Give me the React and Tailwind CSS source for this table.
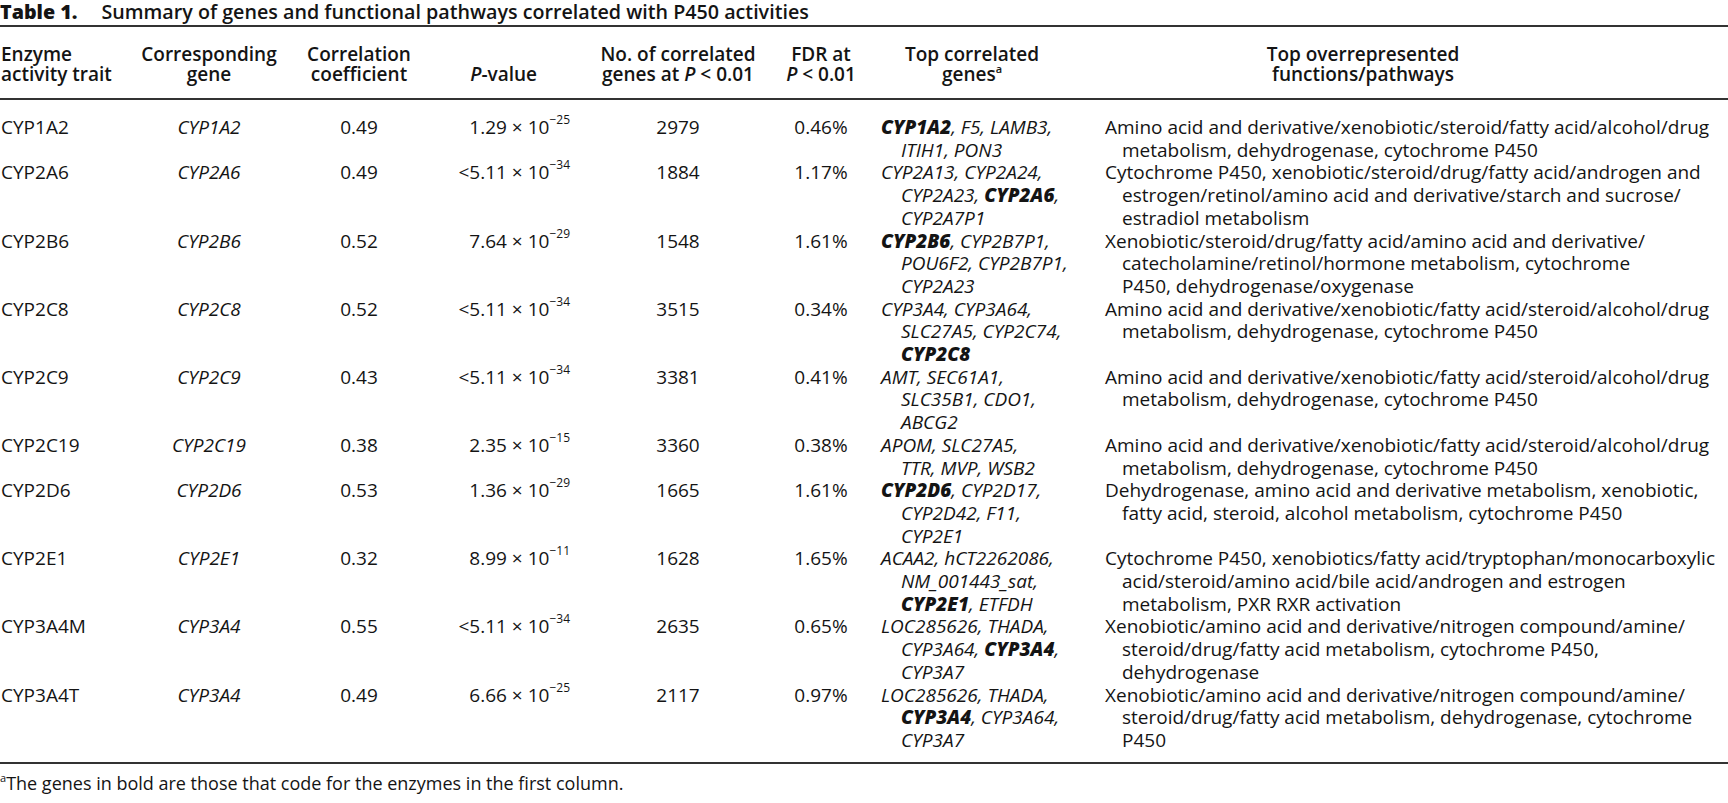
import React from "react";

const rows = [
  {
    trait: "CYP1A2", gene: "CYP1A2", r: "0.49", p: ["1.29", "25"], n: "2979", fdr: "0.46%",
    genes: ["**CYP1A2**, F5, LAMB3,", "ITIH1, PON3"],
    fn: ["Amino acid and derivative/xenobiotic/steroid/fatty acid/alcohol/drug", "metabolism, dehydrogenase, cytochrome P450"],
  },
  {
    trait: "CYP2A6", gene: "CYP2A6", r: "0.49", p: ["<5.11", "34"], n: "1884", fdr: "1.17%",
    genes: ["CYP2A13, CYP2A24,", "CYP2A23, **CYP2A6**,", "CYP2A7P1"],
    fn: ["Cytochrome P450, xenobiotic/steroid/drug/fatty acid/androgen and", "estrogen/retinol/amino acid and derivative/starch and sucrose/", "estradiol metabolism"],
  },
  {
    trait: "CYP2B6", gene: "CYP2B6", r: "0.52", p: ["7.64", "29"], n: "1548", fdr: "1.61%",
    genes: ["**CYP2B6**, CYP2B7P1,", "POU6F2, CYP2B7P1,", "CYP2A23"],
    fn: ["Xenobiotic/steroid/drug/fatty acid/amino acid and derivative/", "catecholamine/retinol/hormone metabolism, cytochrome", "P450, dehydrogenase/oxygenase"],
  },
  {
    trait: "CYP2C8", gene: "CYP2C8", r: "0.52", p: ["<5.11", "34"], n: "3515", fdr: "0.34%",
    genes: ["CYP3A4, CYP3A64,", "SLC27A5, CYP2C74,", "**CYP2C8**"],
    fn: ["Amino acid and derivative/xenobiotic/fatty acid/steroid/alcohol/drug", "metabolism, dehydrogenase, cytochrome P450"],
  },
  {
    trait: "CYP2C9", gene: "CYP2C9", r: "0.43", p: ["<5.11", "34"], n: "3381", fdr: "0.41%",
    genes: ["AMT, SEC61A1,", "SLC35B1, CDO1,", "ABCG2"],
    fn: ["Amino acid and derivative/xenobiotic/fatty acid/steroid/alcohol/drug", "metabolism, dehydrogenase, cytochrome P450"],
  },
  {
    trait: "CYP2C19", gene: "CYP2C19", r: "0.38", p: ["2.35", "15"], n: "3360", fdr: "0.38%",
    genes: ["APOM, SLC27A5,", "TTR, MVP, WSB2"],
    fn: ["Amino acid and derivative/xenobiotic/fatty acid/steroid/alcohol/drug", "metabolism, dehydrogenase, cytochrome P450"],
  },
  {
    trait: "CYP2D6", gene: "CYP2D6", r: "0.53", p: ["1.36", "29"], n: "1665", fdr: "1.61%",
    genes: ["**CYP2D6**, CYP2D17,", "CYP2D42, F11,", "CYP2E1"],
    fn: ["Dehydrogenase, amino acid and derivative metabolism, xenobiotic,", "fatty acid, steroid, alcohol metabolism, cytochrome P450"],
  },
  {
    trait: "CYP2E1", gene: "CYP2E1", r: "0.32", p: ["8.99", "11"], n: "1628", fdr: "1.65%",
    genes: ["ACAA2, hCT2262086,", "NM_001443_sat,", "**CYP2E1**, ETFDH"],
    fn: ["Cytochrome P450, xenobiotics/fatty acid/tryptophan/monocarboxylic", "acid/steroid/amino acid/bile acid/androgen and estrogen", "metabolism, PXR RXR activation"],
  },
  {
    trait: "CYP3A4M", gene: "CYP3A4", r: "0.55", p: ["<5.11", "34"], n: "2635", fdr: "0.65%",
    genes: ["LOC285626, THADA,", "CYP3A64, **CYP3A4**,", "CYP3A7"],
    fn: ["Xenobiotic/amino acid and derivative/nitrogen compound/amine/", "steroid/drug/fatty acid metabolism, cytochrome P450,", "dehydrogenase"],
  },
  {
    trait: "CYP3A4T", gene: "CYP3A4", r: "0.49", p: ["6.66", "25"], n: "2117", fdr: "0.97%",
    genes: ["LOC285626, THADA,", "**CYP3A4**, CYP3A64,", "CYP3A7"],
    fn: ["Xenobiotic/amino acid and derivative/nitrogen compound/amine/", "steroid/drug/fatty acid metabolism, dehydrogenase, cytochrome", "P450"],
  },
];

const GRID = "grid grid-cols-[130px_158px_142px_165px_166px_120px_209px_638px]";

function Rich({ text }) {
  const parts = text.split("**");
  return parts.map((p, i) =>
    i % 2 ? (
      <span key={i} className="font-extrabold">{p}</span>
    ) : (
      <span key={i}>{p}</span>
    )
  );
}

function Exp({ children }) {
  return <sup className="text-[12px] -top-[10px]">{children}</sup>;
}

function Rule() {
  return <div className="h-[2px] w-full bg-[#333333]" />;
}

export default function App() {
  return (
    <div className="w-[1728px] h-[803px] bg-white text-[#141414] font-['Open_Sans',sans-serif] text-[19px]">
      <div className="leading-[24px] whitespace-nowrap text-[19.7px]">
        <span className="font-extrabold">Table 1.</span>
        <span className="ml-[24px] font-semibold">
          Summary of genes and functional pathways correlated with P450 activities
        </span>
      </div>
      <div className="mt-[1px]">
        <Rule />
      </div>

      <div className={`${GRID} pt-[17px] pb-[14px] leading-[20px] font-semibold whitespace-nowrap`}>
        <div className="pl-[1px]">
          <div>Enzyme</div>
          <div>activity trait</div>
        </div>
        <div className="text-center">
          <div>Corresponding</div>
          <div>gene</div>
        </div>
        <div className="text-center">
          <div>Correlation</div>
          <div>coefficient</div>
        </div>
        <div className="text-right pr-[58px]">
          <div>&nbsp;</div>
          <div>
            <span className="italic">P</span>-value
          </div>
        </div>
        <div className="text-center">
          <div>No. of correlated</div>
          <div>
            genes at <span className="italic">P</span> &lt; 0.01
          </div>
        </div>
        <div className="text-center">
          <div>FDR at</div>
          <div>
            <span className="italic">P</span> &lt; 0.01
          </div>
        </div>
        <div className="text-center pr-[27px]">
          <div>Top correlated</div>
          <div>
            genes<sup className="text-[11px] -top-[8px]">a</sup>
          </div>
        </div>
        <div className="text-center pl-[15px] pr-[107px]">
          <div>Top overrepresented</div>
          <div>functions/pathways</div>
        </div>
      </div>
      <Rule />

      <div className="pt-[16px] pb-[10px] leading-[22.7px] whitespace-nowrap">
        {rows.map((row) => (
          <div key={row.trait} className={GRID}>
            <div className="pl-[1px]">{row.trait}</div>
            <div className="text-center italic">{row.gene}</div>
            <div className="text-center">{row.r}</div>
            <div className="text-right pr-[25px]">
              {row.p[0]} × 10<Exp>−{row.p[1]}</Exp>
            </div>
            <div className="text-center">{row.n}</div>
            <div className="text-center">{row.fdr}</div>
            <div className="italic">
              {row.genes.map((l, i) => (
                <div key={i} className={i ? "pl-[20px]" : ""}>
                  <Rich text={l} />
                </div>
              ))}
            </div>
            <div className="pl-[15px]">
              {row.fn.map((l, i) => (
                <div key={i} className={i ? "pl-[17px]" : ""}>
                  {l}
                </div>
              ))}
            </div>
          </div>
        ))}
      </div>
      <Rule />

      <div className="pt-[8px] leading-[23px] whitespace-nowrap text-[18px]">
        <sup className="text-[11px] -top-[8px]">a</sup>
        The genes in bold are those that code for the enzymes in the first column.
      </div>
    </div>
  );
}
